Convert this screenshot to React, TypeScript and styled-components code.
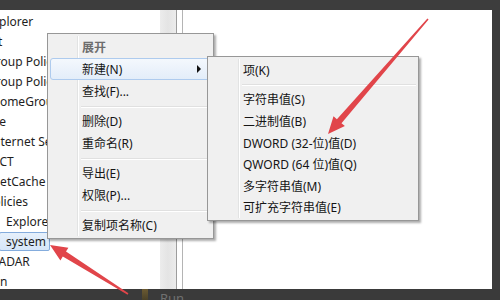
import React from "react";
import styled, { createGlobalStyle } from "styled-components";

const GlobalStyle = createGlobalStyle`
  html, body {
    margin: 0;
    padding: 0;
    background: #3c3c3c;
  }
  body {
    font-family: "Noto Sans", "Noto Sans CJK SC", sans-serif;
  }
`;

const Screen = styled.div`
  position: relative;
  width: 500px;
  height: 300px;
  overflow: hidden;
  background: #3c3c3c;
  display: grid;
  grid-template-rows: 10px 1fr 11px;
`;

const TopBar = styled.div`
  background: #3d3d3d;
`;

const Body = styled.div`
  display: flex;
  min-height: 0;
  padding-right: 8px;
`;

const TreePane = styled.div`
  width: 160px;
  background: #fff;
  padding-top: 2px;
  overflow: hidden;
  font-family: "Noto Sans", sans-serif;
  font-size: 12px;
  color: #1e1e1e;
`;

const TreeRow = styled.div<{ $shift: number }>`
  height: 20px;
  line-height: 20px;
  white-space: nowrap;
  overflow: hidden;
  text-indent: ${(p) => p.$shift}px;
`;

const SelectedLabel = styled.span`
  box-sizing: border-box;
  height: 19px;
  display: inline-flex;
  align-items: center;
  vertical-align: top;
  margin-left: -1px;
  padding: 0 3px 0 6px;
  border: 1px solid #84acdd;
  border-radius: 2px;
  background: linear-gradient(#e6f0fb, #d6e6f9);
`;

const ScrollColumn = styled.div`
  width: 16px;
  background: linear-gradient(90deg, #ececec, #e4e4e4 50%, #ececec);
`;

const Splitter = styled.div`
  width: 5px;
  background: #fff;
  border-left: 1px solid #9d9d9d;
  border-right: 1px solid #b4b4b4;
`;

const RightPane = styled.div`
  flex: 1;
  background: #fff;
`;

const BottomBar = styled.div`
  background: #3a3a3a;
  display: flex;
  align-items: flex-start;
  gap: 12px;
  padding-left: 142px;
  overflow: hidden;
`;

const TaskIcon = styled.div`
  width: 6px;
  height: 11px;
  background: linear-gradient(#6b5a32, #4a4128);
`;

const RunText = styled.span`
  font-family: "Noto Sans", sans-serif;
  font-size: 13px;
  line-height: 13px;
  margin-top: 3px;
  color: #707070;
`;

const Menu = styled.div<{ $x: number; $y: number; $w: number; $gutter: number }>`
  position: absolute;
  left: ${(p) => p.$x}px;
  top: ${(p) => p.$y}px;
  width: ${(p) => p.$w}px;
  box-sizing: border-box;
  padding: 2px;
  background: #f0f0f0;
  border: 1px solid #979797;
  box-shadow: 2px 2px 2px rgba(0, 0, 0, 0.32);
  font-family: "Noto Sans", "Noto Sans CJK SC", sans-serif;
  font-size: 12px;
  color: #151515;

  &::before {
    content: "";
    position: absolute;
    top: 2px;
    bottom: 2px;
    left: ${(p) => p.$gutter}px;
    width: 1px;
    background: #e2e3e3;
    box-shadow: 1px 0 0 #fff;
  }
`;

const MenuItem = styled.div<{ $h: number; $pad: number; $active?: boolean; $bold?: boolean }>`
  position: relative;
  box-sizing: border-box;
  height: ${(p) => p.$h}px;
  display: flex;
  align-items: center;
  padding-left: ${(p) => p.$pad - (p.$active ? 1 : 0)}px;
  white-space: nowrap;
  font-weight: ${(p) => (p.$bold ? 700 : 400)};
  color: ${(p) => (p.$bold ? "#6d6d6d" : "inherit")};
  border: ${(p) => (p.$active ? "1px solid #aecbee" : "none")};
  border-radius: 3px;
  background: ${(p) =>
    p.$active ? "linear-gradient(#f4f8fd, #e3edf9)" : "transparent"};
`;

const SubArrow = styled.span`
  position: absolute;
  right: 9px;
  top: 50%;
  margin-top: -4px;
  width: 0;
  height: 0;
  border-top: 4px solid transparent;
  border-bottom: 4px solid transparent;
  border-left: 4px solid #111;
`;

const Separator = styled.div<{ $gutter: number }>`
  height: 8px;
  display: flex;
  align-items: center;
  padding-left: ${(p) => p.$gutter + 2}px;

  &::after {
    content: "";
    flex: 1;
    height: 1px;
    background: #e0e0e0;
    box-shadow: 0 1px 0 #fff;
  }
`;

const Annotations = styled.svg`
  position: absolute;
  left: 0;
  top: 0;
  pointer-events: none;
`;

const treeRows = [
  { text: "Explorer", shift: -14 },
  { text: "Ext", shift: -15 },
  { text: "Group Policy", shift: -13 },
  { text: "Group Policy Objects", shift: -13 },
  { text: "HomeGroup", shift: -9 },
  { text: "Hide", shift: -20 },
  { text: "Internet Settings", shift: -11 },
  { text: "ACT", shift: -8 },
  { text: "NetCache", shift: -9 },
  { text: "Policies", shift: -14 },
  { text: "Explorer", shift: 6 },
  { text: "system", shift: 0, selected: true },
  { text: "RADAR", shift: -9 },
  { text: "Run", shift: -15 },
];

type Entry = { label?: string; sep?: boolean; active?: boolean; bold?: boolean; sub?: boolean };

const mainMenu: Entry[] = [
  { label: "展开", bold: true },
  { label: "新建(N)", active: true, sub: true },
  { label: "查找(F)..." },
  { sep: true },
  { label: "删除(D)" },
  { label: "重命名(R)" },
  { sep: true },
  { label: "导出(E)" },
  { label: "权限(P)..." },
  { sep: true },
  { label: "复制项名称(C)" },
];

const newMenu: Entry[] = [
  { label: "项(K)" },
  { sep: true },
  { label: "字符串值(S)" },
  { label: "二进制值(B)" },
  { label: "DWORD (32-位)值(D)" },
  { label: "QWORD (64 位)值(Q)" },
  { label: "多字符串值(M)" },
  { label: "可扩充字符串值(E)" },
];

const ContextMenu = ({
  items, x, y, w, gutter, pad, h,
}: { items: Entry[]; x: number; y: number; w: number; gutter: number; pad: number; h: number }) => (
  <Menu $x={x} $y={y} $w={w} $gutter={gutter}>
    {items.map((it, i) =>
      it.sep ? (
        <Separator key={i} $gutter={gutter} />
      ) : (
        <MenuItem key={i} $h={h} $pad={pad} $active={it.active} $bold={it.bold}>
          {it.label}
          {it.sub && <SubArrow />}
        </MenuItem>
      )
    )}
  </Menu>
);

export default function App() {
  return (
    <>
      <GlobalStyle />
      <Screen>
        <TopBar />
        <Body>
          <TreePane>
            {treeRows.map((r, i) => (
              <TreeRow key={i} $shift={r.shift}>
                {r.selected ? <SelectedLabel>{r.text}</SelectedLabel> : r.text}
              </TreeRow>
            ))}
          </TreePane>
          <ScrollColumn />
          <Splitter />
          <RightPane />
        </Body>
        <BottomBar>
          <TaskIcon />
          <RunText>Run</RunText>
        </BottomBar>

        <ContextMenu items={mainMenu} x={47} y={33} w={167} gutter={29} pad={32} h={22} />
        <ContextMenu items={newMenu} x={207} y={56} w={212} gutter={30} pad={33} h={21.6} />

        <Annotations width={500} height={300} viewBox="0 0 500 300">
          <polygon
            fill="#e1454a"
            points="428.6,19.5 341.5,123.2 344.9,126.1 328,134 333.5,116.3 336.9,119.2 427.4,18.5"
          />
          <polygon
            fill="#e1454a"
            points="127.6,294.7 62.8,256.6 60.4,260.4 50,245 68.4,247.8 66,251.6 128.4,293.3"
          />
        </Annotations>
      </Screen>
    </>
  );
}
